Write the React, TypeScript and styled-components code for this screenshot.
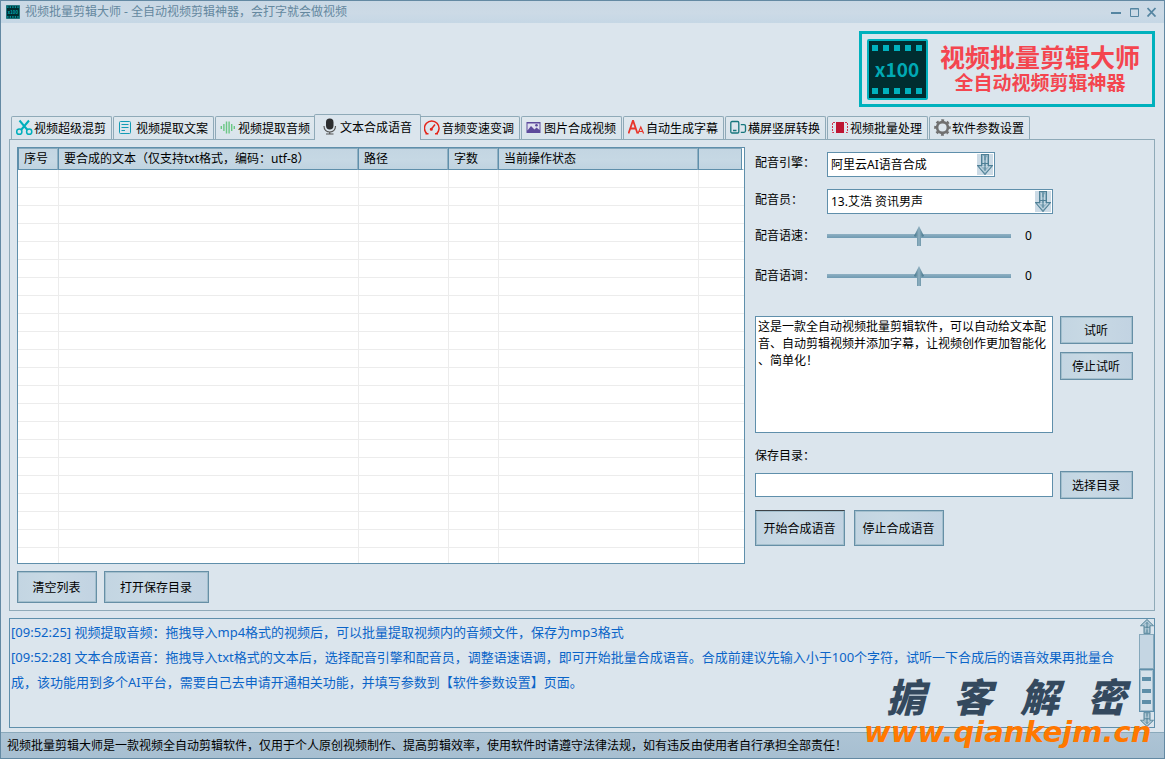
import React from "react";
import styled, { createGlobalStyle, css } from "styled-components";

const line = "#5f8fab";
const softLine = "#8faab8";
const face = "#dbe5ed";

const GlobalStyle = createGlobalStyle`
  *, *::before, *::after { box-sizing: border-box; }
  body {
    margin: 0;
    background: ${face};
    color: #000;
    font-family: "Noto Sans", "Noto Sans CJK SC", sans-serif;
    font-size: 12px;
    line-height: 18px;
  }
  button, input, select, textarea { font: inherit; color: inherit; border-radius: 0; margin: 0; }
  svg { display: block; }
`;

const Window = styled.div`
  position: relative;
  display: flex;
  flex-direction: column;
  height: 100vh;
  min-height: 640px;
  min-width: 1060px;
  border: 1px solid #6389a3;
  background: ${face};
`;

const TitleBar = styled.header`
  display: flex;
  align-items: center;
  gap: 5px;
  height: 22px;
  flex: none;
  padding: 0 5px;
  color: #64889f;
  background: linear-gradient(#c9d8e5, #ccdae6 55%, #c5d7e5);
`;

const TitleText = styled.h1`
  flex: 1;
  margin: 0;
  font-size: 12px;
  line-height: 18px;
  font-weight: 400;
`;

const WindowButton = styled.button`
  display: grid;
  place-items: center;
  width: 14px;
  height: 16px;
  padding: 0;
  border: 0;
  background: none;
  color: #5585a1;
`;

const WindowButtons = styled.div`
  display: flex;
  gap: 4px;
`;

const Banner = styled.div`
  display: flex;
  justify-content: flex-end;
  flex: none;
  padding: 8px 9px 7px;
`;

const Brand = styled.div`
  display: flex;
  align-items: center;
  gap: 12px;
  width: 296px;
  height: 76px;
  padding: 0 5px;
  border: 3px solid #00b1bd;
  color: #f4454f;
  font-family: "Noto Sans CJK SC", sans-serif;
  font-weight: 700;
  white-space: nowrap;
`;

const BrandText = styled.div`
  display: flex;
  flex-direction: column;
  align-items: center;
  padding-bottom: 3px;
`;

const BrandName = styled.div`
  font-size: 25px;
  line-height: 28px;
`;

const BrandTag = styled.div`
  font-size: 19px;
  line-height: 24px;
`;

const TabStrip = styled.div`
  display: flex;
  align-items: flex-end;
  gap: 1px;
  flex: none;
  height: 25px;
  padding-left: 10px;
`;

const Tab = styled.button<{ $active?: boolean }>`
  display: flex;
  align-items: center;
  gap: 1px;
  width: 101px;
  height: 23px;
  padding: 2px 0 0 4px;
  border: 1px solid ${softLine};
  border-bottom: 0;
  border-radius: 2px 2px 0 0;
  background: linear-gradient(#dfe8ee, #d9e4ec);
  white-space: nowrap;
  ${(p) =>
    p.$active &&
    css`
      z-index: 1;
      width: 107px;
      height: 26px;
      gap: 2px;
      margin: 0 -3px -1px;
      padding: 1px 0 0 6px;
      background: ${face};
    `}
  svg { flex: none; margin-bottom: 3px; }
`;

const Panel = styled.main`
  display: flex;
  gap: 10px;
  flex: 1;
  min-height: 0;
  margin: 0 9px 0 8px;
  padding: 7px;
  border: 1px solid ${softLine};
`;

const ListSide = styled.section`
  display: flex;
  flex-direction: column;
  gap: 7px;
  flex: 1;
  min-width: 0;
`;

const ListBox = styled.div`
  flex: 1;
  min-height: 0;
  overflow: hidden;
  border: 1px solid ${line};
  background: #fff;
`;

const List = styled.table`
  width: 100%;
  table-layout: fixed;
  border-collapse: separate;
  border-spacing: 0;
  th {
    height: 22px;
    padding: 1px 5px 0;
    border: 1px solid ${line};
    border-top: 0;
    border-right-color: #90b0c2;
    background: linear-gradient(#c3d5e2, #c6d8e4 60%, #bfd3e0);
    box-shadow: inset 0 1px #86a9bd;
    font-weight: 400;
    line-height: 20px;
    text-align: left;
    white-space: nowrap;
  }
  th:last-child {
    border-right: 2px solid #fff;
    box-shadow: inset 0 1px #86a9bd, inset -1px 0 ${line};
  }
  td {
    height: 18px;
    padding: 0;
    border-bottom: 1px solid #ececec;
    border-left: 1px solid #ececec;
  }
  td:first-child { border-left: 0; }
`;

const ButtonRow = styled.div<{ $gap: number }>`
  display: flex;
  gap: ${(p) => p.$gap}px;
`;

const PushButton = styled.button<{ $w: number; $h: number; $default?: boolean }>`
  flex: none;
  width: ${(p) => p.$w}px;
  height: ${(p) => p.$h}px;
  padding: 2px 1px 0 0;
  border: 1px solid #668fa6;
  border-top-color: ${(p) => (p.$default ? "#3d4348" : "#668fa6")};
  background: linear-gradient(90deg, #c3d5e2, #c8d9e4 40%, #c2d3e2);
  box-shadow: inset 0 0 0 1px #a3bfcd;
  white-space: nowrap;
`;

const Form = styled.section`
  display: flex;
  flex-direction: column;
  flex: none;
  width: 392px;
  padding: 5px 14px 0 0;
`;

const Field = styled.div<{ $top?: number; $middle?: boolean }>`
  display: flex;
  align-items: ${(p) => (p.$middle ? "center" : "flex-start")};
  min-height: 24px;
  margin-top: ${(p) => p.$top ?? 0}px;
`;

const FieldLabel = styled.label`
  width: 72px;
  line-height: 22px;
`;

const Combo = styled.div<{ $w: number }>`
  display: grid;
  width: ${(p) => p.$w}px;
  height: 25px;
  > * { grid-area: 1 / 1; }
  > svg {
    place-self: center end;
    margin-right: 2px;
    pointer-events: none;
  }
`;

const Select = styled.select`
  appearance: none;
  width: 100%;
  height: 25px;
  padding: 0 22px 0 3px;
  border: 1px solid ${line};
  background: #fff;
`;

const thumb = css`
  width: 10px;
  height: 20px;
  border: 0;
  border-radius: 0;
  background: linear-gradient(90deg, #3f7187, #8fb0c1 50%, #3f7187);
  clip-path: polygon(50% 0, 100% 50%, 80% 55%, 70% 50%, 70% 100%, 30% 100%, 30% 50%, 20% 55%, 0 50%);
`;

const Slider = styled.input`
  appearance: none;
  width: 184px;
  height: 20px;
  background: linear-gradient(#8fb0c3, #6f9ab2) center / 100% 4px no-repeat;
  &::-webkit-slider-thumb { appearance: none; ${thumb} }
  &::-moz-range-thumb { ${thumb} }
`;

const SliderValue = styled.output`
  margin-left: 14px;
`;

const SampleRow = styled.div`
  display: flex;
  gap: 7px;
  margin-top: 28px;
`;

const Sample = styled.textarea`
  flex: 1;
  height: 117px;
  padding: 1px 3px 1px 2px;
  border: 1px solid ${line};
  background: #fff;
  line-height: 17px;
  line-break: anywhere;
  resize: none;
  overflow: hidden;
`;

const Stack = styled.div`
  display: flex;
  flex-direction: column;
  gap: 8px;
`;

const FolderLabel = styled.label`
  margin-top: 14px;
`;

const FolderRow = styled.div`
  display: flex;
  align-items: center;
  gap: 7px;
  margin: 6px 0 11px;
`;

const FolderInput = styled.input`
  flex: 1;
  min-width: 0;
  height: 24px;
  padding: 0 4px;
  border: 1px solid ${line};
  background: #fff;
`;

const LogBox = styled.section`
  display: flex;
  flex: none;
  height: 110px;
  margin: 7px 9px 4px 8px;
  border: 1px solid ${line};
`;

const LogText = styled.div`
  flex: 1;
  padding: 1px 14px 0 1px;
  color: #0a64c8;
  font-size: 13px;
  line-height: 25px;
  p { margin: 0; }
`;

const ScrollBar = styled.div`
  display: flex;
  flex-direction: column;
  align-items: center;
  flex: none;
  width: 15px;
`;

const ScrollTrack = styled.div`
  flex: 1;
  width: 100%;
  border: 1px solid #86a8bb;
  background: #c5d6e3;
`;

const ScrollThumb = styled.div`
  display: flex;
  flex-direction: column;
  align-items: center;
  justify-content: space-evenly;
  width: 100%;
  height: 43px;
  border: 1px solid ${line};
  background: #d5e1ea;
  box-shadow: inset 0 0 0 1px #a5bfce;
  i {
    width: 9px;
    height: 4px;
    background: #5d8ea8;
  }
`;

const StatusBar = styled.footer`
  flex: none;
  height: 26px;
  padding: 0 6px;
  border-top: 1px solid #8aa9bb;
  background: linear-gradient(#adc4d5, #a7bfd1);
  line-height: 25px;
`;

const Watermark = styled.div`
  position: absolute;
  right: 6px;
  bottom: 11px;
  width: 294px;
  pointer-events: none;
  font-style: italic;
  font-weight: 700;
  white-space: nowrap;
`;

const WatermarkName = styled.div`
  display: flex;
  justify-content: space-between;
  padding: 0 32px 0 22px;
  color: #34495e;
  font-family: "Noto Sans CJK SC", sans-serif;
  font-size: 39px;
  font-weight: 900;
  line-height: 40px;
`;

const WatermarkUrl = styled.div`
  margin-top: 2px;
  color: #ff7800;
  font-family: "DejaVu Sans", sans-serif;
  font-size: 29px;
  line-height: 30px;
`;

const FilmIcon = ({ size }: { size: number }) => (
  <svg width={size} height={size} viewBox="0 0 61 61" aria-hidden="true">
    <rect x="1" y="1" width="59" height="59" rx="1" fill="#002d30" stroke="#00b1bd" strokeWidth="2" />
    {[5, 16, 27, 38, 49].map((x) => (
      <g key={x} fill="#00b1bd">
        <rect x={x} y="6" width="6" height="6" />
        <rect x={x} y="49" width="6" height="6" />
      </g>
    ))}
    <text x="30" y="38" textAnchor="middle" fill="#00a9b4" fontFamily="Noto Sans CJK SC, sans-serif" fontWeight="700" fontSize="19">
      x100
    </text>
  </svg>
);

const SketchArrow = ({ up, w = 16, h = 20, plate }: { up?: boolean; w?: number; h?: number; plate?: boolean }) => (
  <svg width={w} height={h} viewBox="0 0 16 20" preserveAspectRatio="none" aria-hidden="true">
    {plate && <rect width="16" height="20" fill="#ccdbe6" />}
    <g transform={up ? "rotate(180 8 10)" : undefined} stroke="#4f8096" strokeWidth="1">
      <path d="M4.500 .5h7v10.500h4L8 19.500.5 11h4z" fill="#8fb1c2" />
      <path d="M6.500 2v9M9.500 3v10M3 12l5 5 5-5M5 12h6" fill="none" stroke="#c2d5e0" />
      <path d="M8 1v5M8 8v8M5 9h6" fill="none" />
    </g>
  </svg>
);

const icon = (children: React.ReactNode, w = 17) => (
  <svg width={w} height={w} viewBox={`0 0 ${w} ${w}`} fill="none" aria-hidden="true">
    {children}
  </svg>
);

const tabs = [
  {
    name: "视频超级混剪",
    icon: icon(
      <g stroke="#00afbc" strokeWidth="1.500">
        <path d="M3.500 1.500 11.500 11M13 1.500 5 11" strokeWidth="2" />
        <circle cx="3.300" cy="12.700" r="2.600" />
        <circle cx="13.200" cy="12.700" r="2.600" />
      </g>
    ),
  },
  {
    name: "视频提取文案",
    icon: icon(
      <g stroke="#149bb4">
        <rect x="1.500" y="2.500" width="11" height="12" rx="1" />
        <path d="M3.500 5.500h7M3.500 8.500h7M3.500 11.500h3.500" />
      </g>
    ),
  },
  {
    name: "视频提取音频",
    icon: icon(
      <g stroke="#6ac784" strokeWidth="1.400">
        <path d="M1.300 7v3M3.900 5v7M6.500 2.500v12M9.100 2.500v12M11.700 5v7M14.300 7v3" />
      </g>
    ),
  },
  {
    name: "文本合成语音",
    active: true,
    icon: icon(
      <>
        <rect x="5" y="0.500" width="7.500" height="11" rx="3.700" fill="#2b2d2f" />
        <path d="M3 8c0 8 11.500 8 11.500 0M8.750 14v2M5 16h7.500" stroke="#555" strokeWidth="1.200" />
      </>
    ),
  },
  {
    name: "音频变速变调",
    icon: icon(
      <g stroke="#e3261b" strokeWidth="1.500">
        <path d="M3 14.800A7.300 7.300 0 1 1 12.500 14.800M1.500 14.800h3M11 14.800h3M7 10.500 11 5.500" />
        <circle cx="7.300" cy="10.200" r=".8" />
      </g>
    ),
  },
  {
    name: "图片合成视频",
    icon: icon(
      <>
        <rect x=".5" y="3" width="14" height="11" fill="#5d4a9c" />
        <path d="M1.500 11.500 5 7l3.500 3.500 2-2L13.500 11V4.500h-12z" fill="#dfe0f0" />
        <circle cx="10.500" cy="6.300" r="1.300" fill="#5d4a9c" />
      </>
    ),
  },
  {
    name: "自动生成字幕",
    icon: icon(
      <g stroke="#e8352a">
        <path d="M.5 14.500 4.800 2h.4l4.300 12.500M2.200 9.500h5.500" strokeWidth="1.800" />
        <path d="M10 14.500 12.800 8l2.800 6.500M11 12.500h3.600" strokeWidth="1.200" />
      </g>
    ),
  },
  {
    name: "横屏竖屏转换",
    icon: icon(
      <g stroke="#16767c" strokeWidth="1.300">
        <rect x=".8" y="2.500" width="8" height="11.500" rx="1.200" />
        <path d="M3 11.500h3.500M10.800 5.700h3.200q1.500 0 1.500 1.500v4.600q0 1.500-1.500 1.500h-3.200" />
      </g>
    ),
  },
  {
    name: "视频批量处理",
    icon: icon(
      <>
        <rect x="4" y="3" width="8" height="11" fill="#bd1532" />
        <g stroke="#d0354e" strokeDasharray="2 1">
          <path d="M3 3.500h-2.500v10h2.500M13 3.500h2.500v10h-2.500" />
        </g>
      </>
    ),
  },
  {
    name: "软件参数设置",
    icon: icon(
      <g stroke="#707070">
        <circle cx="8.500" cy="8.500" r="5.400" strokeWidth="2.600" />
        <circle cx="8.500" cy="8.500" r="7.200" strokeWidth="2.200" strokeDasharray="2.827 2.827" strokeDashoffset="1.414" />
      </g>
    ),
  },
];

const columns = [
  { title: "序号", width: 40 },
  { title: "要合成的文本（仅支持txt格式，编码：utf-8）", width: 300 },
  { title: "路径", width: 90 },
  { title: "字数", width: 50 },
  { title: "当前操作状态", width: 200 },
  { title: "", width: undefined },
];

const emptyRows = Array.from({ length: 40 }, (_, i) => i);

export default function App() {
  return (
    <>
      <GlobalStyle />
      <Window>
        <TitleBar>
          <FilmIcon size={14} />
          <TitleText>视频批量剪辑大师 - 全自动视频剪辑神器，会打字就会做视频</TitleText>
          <WindowButtons>
            <WindowButton aria-label="最小化">
              <svg width="10" height="10" viewBox="0 0 10 10" stroke="currentColor" strokeWidth="2">
                <path d="M0 6h10" />
              </svg>
            </WindowButton>
            <WindowButton aria-label="最大化">
              <svg width="10" height="10" viewBox="0 0 10 10" stroke="currentColor" fill="none">
                <path d="M1.500 1.500h8v8h-8zM1.500 2h8" />
              </svg>
            </WindowButton>
            <WindowButton aria-label="关闭">
              <svg width="10" height="10" viewBox="0 0 10 10" stroke="currentColor" strokeWidth="1.800">
                <path d="M.5 1l8 8.500M8.500 1 .5 9.500" />
              </svg>
            </WindowButton>
          </WindowButtons>
        </TitleBar>

        <Banner>
          <Brand>
            <FilmIcon size={61} />
            <BrandText>
              <BrandName>视频批量剪辑大师</BrandName>
              <BrandTag>全自动视频剪辑神器</BrandTag>
            </BrandText>
          </Brand>
        </Banner>

        <TabStrip role="tablist">
          {tabs.map((t) => (
            <Tab key={t.name} role="tab" aria-selected={!!t.active} $active={t.active}>
              {t.icon}
              {t.name}
            </Tab>
          ))}
        </TabStrip>

        <Panel>
          <ListSide>
            <ListBox>
              <List>
                <colgroup>
                  {columns.map((c, i) => (
                    <col key={i} width={c.width} />
                  ))}
                </colgroup>
                <thead>
                  <tr>
                    {columns.map((c, i) => (
                      <th key={i} scope="col">{c.title}</th>
                    ))}
                  </tr>
                </thead>
                <tbody>
                  {emptyRows.map((r) => (
                    <tr key={r}>
                      {columns.map((_, i) => (
                        <td key={i} />
                      ))}
                    </tr>
                  ))}
                </tbody>
              </List>
            </ListBox>
            <ButtonRow $gap={7}>
              <PushButton $w={80} $h={32}>清空列表</PushButton>
              <PushButton $w={105} $h={32}>打开保存目录</PushButton>
            </ButtonRow>
          </ListSide>

          <Form>
            <Field>
              <FieldLabel htmlFor="engine">配音引擎：</FieldLabel>
              <Combo $w={168}>
                <Select id="engine">
                  <option>阿里云AI语音合成</option>
                </Select>
                <SketchArrow plate h={21} />
              </Combo>
            </Field>
            <Field $top={12}>
              <FieldLabel htmlFor="voice">配音员：</FieldLabel>
              <Combo $w={226}>
                <Select id="voice">
                  <option>13.艾浩 资讯男声</option>
                </Select>
                <SketchArrow plate h={21} />
              </Combo>
            </Field>
            <Field $top={10} $middle>
              <FieldLabel htmlFor="speed">配音语速：</FieldLabel>
              <Slider id="speed" type="range" min={-500} max={500} defaultValue={0} />
              <SliderValue htmlFor="speed">0</SliderValue>
            </Field>
            <Field $top={16} $middle>
              <FieldLabel htmlFor="pitch">配音语调：</FieldLabel>
              <Slider id="pitch" type="range" min={-500} max={500} defaultValue={0} />
              <SliderValue htmlFor="pitch">0</SliderValue>
            </Field>
            <SampleRow>
              <Sample
                aria-label="试听文本"
                spellCheck={false}
                defaultValue="这是一款全自动视频批量剪辑软件，可以自动给文本配音、自动剪辑视频并添加字幕，让视频创作更加智能化、简单化！"
              />
              <Stack>
                <PushButton $w={73} $h={28}>试听</PushButton>
                <PushButton $w={73} $h={28}>停止试听</PushButton>
              </Stack>
            </SampleRow>
            <FolderLabel htmlFor="folder">保存目录：</FolderLabel>
            <FolderRow>
              <FolderInput id="folder" type="text" />
              <PushButton $w={73} $h={28}>选择目录</PushButton>
            </FolderRow>
            <ButtonRow $gap={9}>
              <PushButton $w={90} $h={36} $default>开始合成语音</PushButton>
              <PushButton $w={90} $h={36}>停止合成语音</PushButton>
            </ButtonRow>
          </Form>
        </Panel>

        <LogBox>
          <LogText>
            <p>[09:52:25] 视频提取音频：拖拽导入mp4格式的视频后，可以批量提取视频内的音频文件，保存为mp3格式</p>
            <p>
              [09:52:28] 文本合成语音：拖拽导入txt格式的文本后，选择配音引擎和配音员，调整语速语调，即可开始批量合成语音。合成前建议先输入小于100个字符，试听一下合成后的语音效果再批量合成，该功能用到多个AI平台，需要自己去申请开通相关功能，并填写参数到【软件参数设置】页面。
            </p>
          </LogText>
          <ScrollBar aria-hidden="true">
            <SketchArrow up w={14} h={15} />
            <ScrollTrack />
            <ScrollThumb>
              <i />
              <i />
              <i />
            </ScrollThumb>
            <SketchArrow w={14} h={15} />
          </ScrollBar>
        </LogBox>

        <StatusBar>
          视频批量剪辑大师是一款视频全自动剪辑软件，仅用于个人原创视频制作、提高剪辑效率，使用软件时请遵守法律法规，如有违反由使用者自行承担全部责任！
        </StatusBar>

        <Watermark>
          <WatermarkName>
            <span>掮</span>
            <span>客</span>
            <span>解</span>
            <span>密</span>
          </WatermarkName>
          <WatermarkUrl>www.qiankejm.cn</WatermarkUrl>
        </Watermark>
      </Window>
    </>
  );
}
